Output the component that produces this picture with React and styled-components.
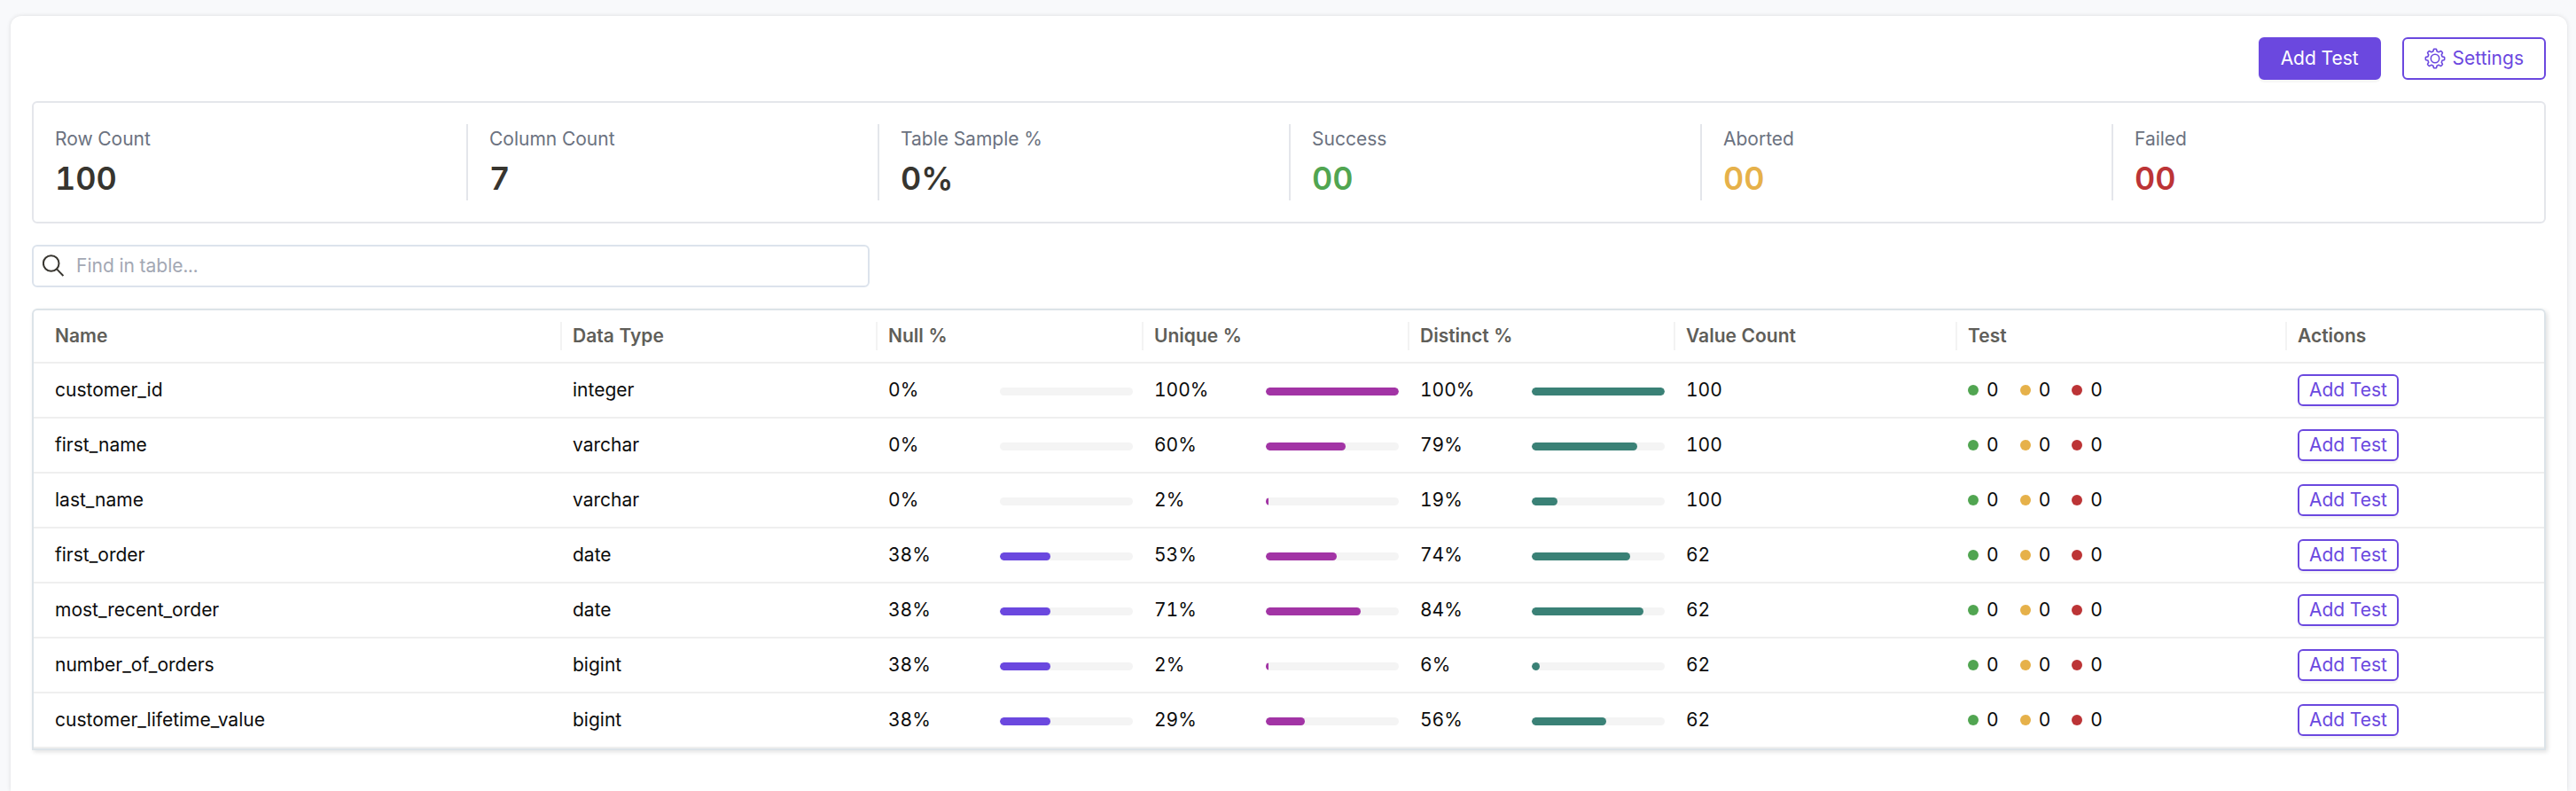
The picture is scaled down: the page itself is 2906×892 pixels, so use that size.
import React, { useState } from "react";
import styled, { createGlobalStyle } from "styled-components";

const purple = "#6b48df";
const success = "#51a551";
const aborted = "#e6b14a";
const failed = "#bc3436";

const GlobalStyle = createGlobalStyle`
  * { box-sizing: border-box; }
  body {
    margin: 0;
    background: #f8f9fb;
    color: #0c0c0c;
    font-family: Inter, "Liberation Sans", sans-serif;
    font-size: 21px;
    line-height: 30px;
    font-variant-numeric: tabular-nums;
  }
  button, input {
    font: inherit;
  }
`;

const Page = styled.div`
  display: flex;
  flex-direction: column;
  min-height: 100vh;
  padding: 18px 10px 0 12px;
`;

const Card = styled.main`
  display: flex;
  flex-direction: column;
  flex: 1;
  gap: 24px;
  padding: 24px;
  background: #fff;
  border-radius: 12px 12px 0 0;
  box-shadow: 0 0 5px rgba(0, 0, 0, 0.12);
`;

const Toolbar = styled.header`
  display: flex;
  justify-content: flex-end;
  gap: 24px;
`;

const Button = styled.button`
  display: inline-flex;
  align-items: center;
  justify-content: center;
  gap: 8px;
  height: ${(p) => (p.$small ? 36 : 48)}px;
  padding: 0 ${(p) => (p.$small ? 11 : 23)}px;
  border: 2px solid ${purple};
  border-radius: 6px;
  background: ${(p) => (p.$filled ? purple : "#fff")};
  color: ${(p) => (p.$filled ? "#fff" : purple)};
  white-space: nowrap;
  cursor: pointer;
  box-shadow: ${(p) => (p.$flat ? "none" : "0 3px 0 rgba(0, 0, 0, 0.03)")};
`;

const Summary = styled.section`
  display: grid;
  grid-template-columns: repeat(6, 1fr);
  padding: 24px;
  border: 2px solid #e4e6eb;
  border-radius: 6px;
`;

const Stat = styled.div`
  height: 86px;
  padding-left: 24px;
  border-left: 2px solid #e4e6eb;
  &:first-child {
    padding-left: 0;
    border-left: 0;
  }
`;

const StatLabel = styled.div`
  padding-top: 2px;
  color: #6b7280;
`;

const StatValue = styled.div`
  color: ${(p) => p.$color || "#37352f"};
  font-size: 36px;
  line-height: 58px;
  font-weight: 600;
`;

const SearchBox = styled.label`
  display: flex;
  align-items: center;
  gap: 14px;
  width: 33.33%;
  height: 48px;
  padding: 0 10px;
  border: 2px solid #dce3ec;
  border-radius: 6px;
`;

const SearchInput = styled.input`
  flex: 1;
  min-width: 0;
  padding: 0;
  border: 0;
  outline: 0;
  background: transparent;
  color: inherit;
  &::placeholder {
    color: #a3a8b4;
    opacity: 1;
  }
`;

const TableFrame = styled.div`
  border: 2px solid #dce3e8;
  border-radius: 6px 6px 0 0;
  box-shadow: 2px 2px 5px rgba(0, 0, 0, 0.12);
`;

const Table = styled.table`
  width: 100%;
  table-layout: fixed;
  border-collapse: separate;
  border-spacing: 0;
`;

const Column = styled.col`
  width: ${(p) => p.$width}px;
`;

const HeadCell = styled.th`
  height: 60px;
  padding: 0 0 0 12px;
  border-bottom: 2px solid #efefef;
  color: #5f5e59;
  font-weight: 600;
  text-align: left;
  &:first-child { padding-left: 24px; }
`;

const HeadContent = styled.div`
  display: flex;
  align-items: center;
  height: 32px;
  border-right: ${(p) => (p.$last ? 0 : 2)}px solid #f3f3f3;
`;

const Cell = styled.td`
  height: 62px;
  padding: 0 12px;
  border-bottom: 2px solid #efefef;
  &:first-child { padding-left: 24px; }
`;

const Meter = styled.div`
  display: grid;
  grid-template-columns: 1fr 150px;
  align-items: center;
`;

const Track = styled.div`
  height: 9px;
  margin-top: 3px;
  overflow: hidden;
  border-radius: 5px;
  background: #f4f4f4;
`;

const Fill = styled.div`
  height: 100%;
  border-radius: 5px;
  background: ${(p) => p.$color};
`;

const Results = styled.div`
  display: flex;
  gap: 24px;
`;

const Result = styled.span`
  display: flex;
  align-items: center;
  gap: 9px;
`;

const Dot = styled.i`
  width: 12px;
  height: 12px;
  border-radius: 50%;
  background: ${(p) => p.$color};
`;

const stats = [
  ["Row Count", "100"],
  ["Column Count", "7"],
  ["Table Sample %", "0%"],
  ["Success", "00", success],
  ["Aborted", "00", aborted],
  ["Failed", "00", failed],
];

const columns = [
  ["Name", 298],
  ["Data Type", 178],
  ["Null %", 150],
  ["Unique %", 150],
  ["Distinct %", 150],
  ["Value Count", 159],
  ["Test", 186],
  ["Actions", 145],
];

const rows = [
  ["customer_id", "integer", 0, 100, 100, 100],
  ["first_name", "varchar", 0, 60, 79, 100],
  ["last_name", "varchar", 0, 2, 19, 100],
  ["first_order", "date", 38, 53, 74, 62],
  ["most_recent_order", "date", 38, 71, 84, 62],
  ["number_of_orders", "bigint", 38, 2, 6, 62],
  ["customer_lifetime_value", "bigint", 38, 29, 56, 62],
];

const meterColors = [purple, "#a234a5", "#3a8176"];

function SearchIcon() {
  return (
    <svg width="24" height="26" viewBox="0 0 24 26" fill="none" stroke="#37352f" strokeWidth="2" aria-hidden="true">
      <circle cx="9.7" cy="10" r="8.8" />
      <path d="M16 16.4 23.4 24" />
    </svg>
  );
}

function gearPath() {
  const points = [];
  const steps = 160;
  for (let i = 0; i <= steps; i += 1) {
    const angle = (i / steps) * Math.PI * 2;
    const wave = Math.max(-1, Math.min(1, Math.cos(angle * 8) * 2.2));
    const r = 9.5 + wave * 1.2;
    points.push(`${(12 + r * Math.sin(angle)).toFixed(2)} ${(12 - r * Math.cos(angle)).toFixed(2)}`);
  }
  return `M${points.join("L")}Z`;
}

function GearIcon() {
  return (
    <svg width="24" height="24" viewBox="0 0 24 24" fill="none" stroke="currentColor" strokeWidth="1.6" strokeLinejoin="round" aria-hidden="true">
      <path d={gearPath()} />
      <circle cx="12" cy="12" r="4.7" />
    </svg>
  );
}

function Percent({ value, color }) {
  return (
    <Meter>
      <span>{value}%</span>
      <Track>
        <Fill $color={color} style={{ width: `${value}%` }} />
      </Track>
    </Meter>
  );
}

export default function App() {
  const [query, setQuery] = useState("");
  const visible = rows.filter(([name]) => name.includes(query.toLowerCase()));
  return (
    <>
      <GlobalStyle />
      <Page>
        <Card>
          <Toolbar>
            <Button $filled>Add Test</Button>
            <Button $flat>
              <GearIcon />
              Settings
            </Button>
          </Toolbar>
          <Summary>
            {stats.map(([label, value, color]) => (
              <Stat key={label}>
                <StatLabel>{label}</StatLabel>
                <StatValue $color={color}>{value}</StatValue>
              </Stat>
            ))}
          </Summary>
          <SearchBox>
            <SearchIcon />
            <SearchInput
              type="text"
              aria-label="Find in table"
              placeholder="Find in table..."
              value={query}
              onChange={(e) => setQuery(e.target.value)}
            />
          </SearchBox>
          <TableFrame>
            <Table>
              <colgroup>
                {columns.map(([label, width]) => (
                  <Column key={label} $width={width} />
                ))}
              </colgroup>
              <thead>
                <tr>
                  {columns.map(([label], i) => (
                    <HeadCell key={label} scope="col">
                      <HeadContent $last={i === columns.length - 1}>{label}</HeadContent>
                    </HeadCell>
                  ))}
                </tr>
              </thead>
              <tbody>
                {visible.map(([name, type, nulls, unique, distinct, count]) => (
                  <tr key={name}>
                    <Cell>{name}</Cell>
                    <Cell>{type}</Cell>
                    {[nulls, unique, distinct].map((value, i) => (
                      <Cell key={meterColors[i]}>
                        <Percent value={value} color={meterColors[i]} />
                      </Cell>
                    ))}
                    <Cell>{count}</Cell>
                    <Cell>
                      <Results>
                        {[success, aborted, failed].map((color) => (
                          <Result key={color}>
                            <Dot $color={color} />0
                          </Result>
                        ))}
                      </Results>
                    </Cell>
                    <Cell>
                      <Button $small>Add Test</Button>
                    </Cell>
                  </tr>
                ))}
              </tbody>
            </Table>
          </TableFrame>
        </Card>
      </Page>
    </>
  );
}
